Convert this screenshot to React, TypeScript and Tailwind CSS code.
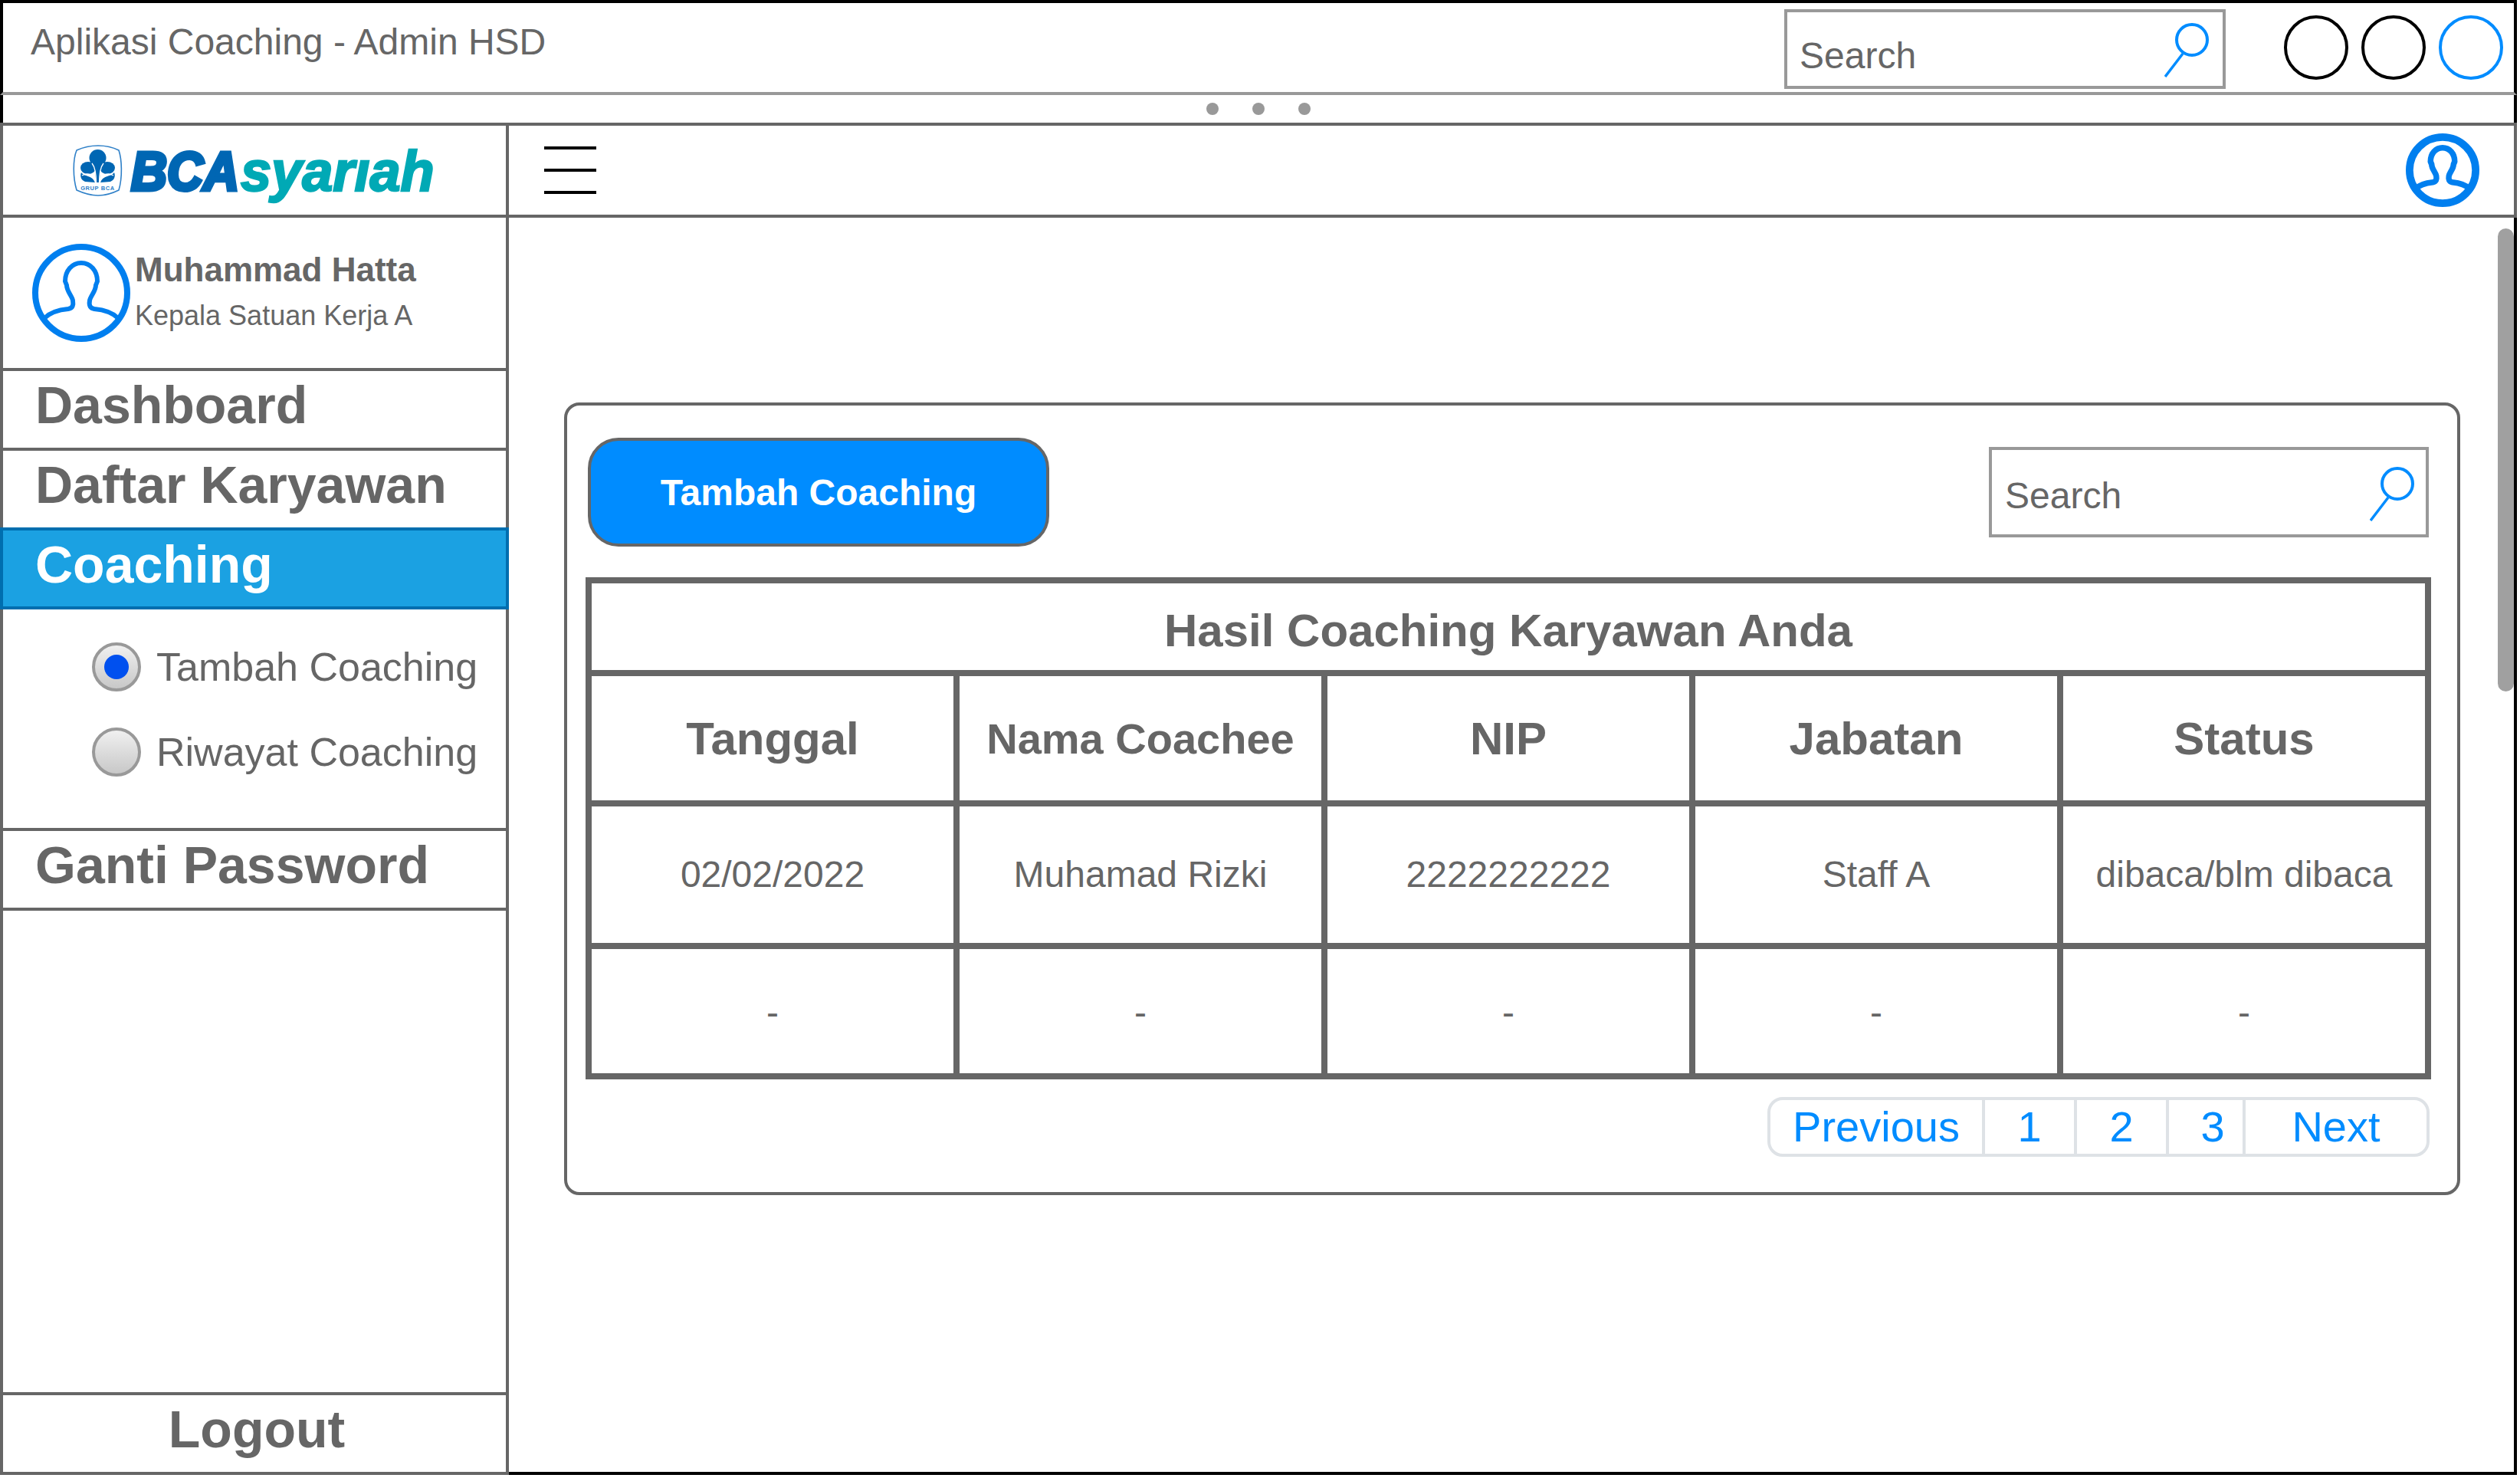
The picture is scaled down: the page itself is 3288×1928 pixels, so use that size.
const sans = "font-['Liberation_Sans',Arial,sans-serif]";

function SearchIcon() {
  return (
    <svg width="60" height="72" viewBox="0 0 60 72" className="shrink-0" fill="none" stroke="#008CFF">
      <circle cx="36" cy="23" r="20" strokeWidth="4" />
      <path d="M24 41 L1 71" strokeWidth="3.5" />
    </svg>
  );
}

function SearchBox({ className }: { className: string }) {
  return (
    <div className={`flex justify-between border-4 border-[#999999] ${className}`}>
      <span className="text-[48px] leading-none text-[#666666]">Search</span>
      <SearchIcon />
    </div>
  );
}

function UserIcon({ size, ring, line }: { size: number; ring: number; line: number }) {
  return (
    <svg width={size} height={size} viewBox="0 0 128 128" fill="none" stroke="#007FEF" className="shrink-0">
      <circle cx="64" cy="64" r={64 - ring / 2} strokeWidth={ring} />
      <path
        d="M16 97 C24 89 36 86 47 85 C53 84 54 80 53 74 C52 68 45 62 45 54 L43 49 C43 35 52 25 64 25 C76 25 85 35 85 49 L83 54 C83 62 76 68 75 74 C74 80 75 84 81 85 C92 86 104 89 112 97"
        strokeWidth={line}
        strokeLinejoin="round"
      />
    </svg>
  );
}

function BcaLogo() {
  const font = "'Liberation Sans', Arial, sans-serif";
  return (
    <svg width="480" height="84" viewBox="0 0 480 84" className="shrink-0 overflow-visible">
      <path
        d="M8 10 C19 5 29 4 36 4 C43 4 53 5 63 10 C67 22 68 45 63 62 C53 67 43 69 36 69 C29 69 19 67 8 62 C3 45 3 22 8 10 Z"
        fill="#ffffff"
        stroke="#2F80C8"
        strokeWidth="1.6"
      />
      <g fill="#0066B3">
        <circle cx="35.5" cy="20" r="11" />
        <path d="M31 28 L40 28 L37.5 52 L33.5 52 Z" />
        <ellipse cx="23" cy="33" rx="10" ry="8" />
        <ellipse cx="48" cy="33" rx="10" ry="8" />
        <path d="M14 39 C18 45 28 42 32 52 L19 51 C14 49 12 44 14 39 Z" />
        <path d="M57 39 C53 45 43 42 39 52 L52 51 C57 49 59 44 57 39 Z" />
      </g>
      <g fill="none" stroke="#ffffff" strokeWidth="1.3">
        <path d="M15 43 C23 38 31 42 33 53" />
        <path d="M56 43 C48 38 40 42 38 53" />
        <path d="M28 27 C32 32 33.5 42 33.5 53" />
        <path d="M43 27 C39 32 37.5 42 37.5 53" />
      </g>
      <text x="35.5" y="62" textAnchor="middle" fontSize="7.5" fontWeight="700" fill="#2F80C8" letterSpacing="0.6" fontFamily={font}>
        GRUP BCA
      </text>
      <text
        transform="translate(79 62) scale(0.93 1)"
        fontSize="70"
        fontWeight="700"
        fontStyle="italic"
        fill="#0066B3"
        stroke="#0066B3"
        strokeWidth="5"
        fontFamily={font}
      >
        BCA
      </text>
      <text
        transform="translate(222 63) scale(0.975 1)"
        fontSize="74"
        fontWeight="700"
        fontStyle="italic"
        fill="#00A9B5"
        stroke="#00A9B5"
        strokeWidth="2.5"
        fontFamily={font}
      >
        syarıah
      </text>
    </svg>
  );
}

function NavItem({ label, className = "" }: { label: string; className?: string }) {
  return (
    <div className={`pl-[42px] pt-[10px] text-[68px] font-bold leading-none text-[#666666] ${className}`}>{label}</div>
  );
}

function Radio({ label, checked }: { label: string; checked?: boolean }) {
  return (
    <div className="flex items-center gap-[20px]">
      <div className="flex h-[64px] w-[64px] shrink-0 items-center justify-center rounded-full border-4 border-[#999999] bg-gradient-to-b from-[#f0f0f0] to-[#c8c8c8]">
        {checked && <div className="h-[32px] w-[32px] rounded-full bg-[#0050EF]" />}
      </div>
      <span className="text-[52px] leading-none text-[#666666]">{label}</span>
    </div>
  );
}

const columns = "grid grid-cols-[472px_480px_480px_480px_480px]";

function Row({ cells, className, cellClass }: { cells: { text: string; size?: string }[]; className: string; cellClass: string }) {
  return (
    <div className={`${columns} border-t-8 border-[#666666] ${className}`}>
      {cells.map((cell, i) => (
        <div
          key={i}
          className={`flex items-center justify-center ${i > 0 ? "border-l-8 border-[#666666]" : ""} ${cellClass} ${cell.size ?? ""}`}
        >
          {cell.text}
        </div>
      ))}
    </div>
  );
}

function Pagination() {
  const items = [
    { label: "Previous", w: "w-[276px]", extra: "" },
    { label: "1", w: "w-[120px]", extra: "" },
    { label: "2", w: "w-[120px]", extra: "" },
    { label: "3", w: "w-[100px]", extra: "pl-[18px]" },
    { label: "Next", w: "w-[240px]", extra: "" },
  ];
  return (
    <div className="mr-[2px] mt-[23px] flex h-[78px] justify-end">
      <div className="flex overflow-hidden rounded-[20px] border-4 border-[#dee2e6]">
        {items.map((item, i) => (
          <div
            key={item.label}
            className={`flex items-center justify-center text-[56px] leading-none text-[#008CFF] ${item.w} ${item.extra} ${i > 0 ? "border-l-4 border-[#dee2e6]" : ""}`}
          >
            {item.label}
          </div>
        ))}
      </div>
    </div>
  );
}

export default function App() {
  const dashes = ["-", "-", "-", "-", "-"].map((text) => ({ text }));
  return (
    <div className={`flex h-[1924px] w-[3284px] flex-col overflow-hidden border-t-4 border-black bg-white ${sans}`}>
      {/* window chrome */}
      <div className="flex h-[120px] shrink-0 justify-between border-b-4 border-x-4 border-b-[#999999] border-x-black pl-[36px]">
        <span className="pt-[27px] text-[48px] leading-none text-[#666666]">Aplikasi Coaching - Admin HSD</span>
        <div className="flex pt-[8px]">
          <SearchBox className="h-[104px] w-[576px] pl-[16px] pr-[16px] pt-[33px] [&>svg]:-mt-[20px]" />
          <div className="ml-[76px] mr-[14px] flex gap-[17px] pt-[8px]">
            <div className="h-[84px] w-[84px] rounded-full border-4 border-black" />
            <div className="h-[84px] w-[84px] rounded-full border-4 border-black" />
            <div className="h-[84px] w-[84px] rounded-full border-4 border-[#008CFF]" />
          </div>
        </div>
      </div>
      <div className="flex h-[36px] shrink-0 items-center justify-center gap-[44px] border-x-4 border-black">
        <div className="h-[16px] w-[16px] rounded-full bg-[#999999]" />
        <div className="h-[16px] w-[16px] rounded-full bg-[#999999]" />
        <div className="h-[16px] w-[16px] rounded-full bg-[#999999]" />
      </div>

      <div className="flex flex-1 border-t-4 border-[#666666]">
        {/* sidebar */}
        <aside className="flex w-[664px] shrink-0 flex-col border-x-4 border-b-4 border-[#666666]">
          <div className="flex h-[120px] shrink-0 items-start justify-center border-b-4 border-[#666666] pt-[22px]">
            <BcaLogo />
          </div>
          <div className="flex h-[200px] shrink-0 gap-[6px] border-b-4 border-[#666666] pl-[38px] pt-[34px]">
            <UserIcon size={128} ring={8} line={6} />
            <div className="pt-[12px] text-[#666666]">
              <div className="text-[44px] font-bold leading-none">Muhammad Hatta</div>
              <div className="mt-[20px] text-[36px] leading-none">Kepala Satuan Kerja A</div>
            </div>
          </div>
          <NavItem label="Dashboard" className="h-[104px] border-b-4 border-[#666666]" />
          <NavItem label="Daftar Karyawan" className="h-[100px]" />
          <div className="-mx-[4px] h-[107px] border-4 border-[#006EAF] bg-[#1BA1E2] pl-[42px] pt-[10px] text-[68px] font-bold leading-none text-white">
            Coaching
          </div>
          <div className="flex h-[285px] shrink-0 flex-col gap-[47px] pl-[116px] pt-[43px]">
            <Radio label="Tambah Coaching" checked />
            <Radio label="Riwayat Coaching" />
          </div>
          <NavItem label="Ganti Password" className="h-[108px] border-y-4 border-[#666666]" />
          <div className="flex-1" />
          <div className="h-[104px] border-t-4 border-[#666666] pl-[6px] pt-[10px] text-center text-[68px] font-bold leading-none text-[#666666]">
            Logout
          </div>
        </aside>

        {/* main */}
        <main className="relative flex flex-1 flex-col">
          <div className="flex h-[120px] shrink-0 items-start justify-between border-b-4 border-r-4 border-[#666666]">
            <div className="ml-[46px] mt-[27px] flex w-[68px] flex-col gap-[25px]">
              <div className="h-[4px] bg-black" />
              <div className="h-[4px] bg-black" />
              <div className="h-[4px] bg-black" />
            </div>
            <div className="mr-[45px] mt-[10px]">
              <UserIcon size={96} ring={13} line={10} />
            </div>
          </div>
          <div className="flex-1 border-b-4 border-r-4 border-black pl-[72px] pt-[241px]">
            <section className="h-[1034px] w-[2474px] rounded-[20px] border-4 border-[#666666] pl-[24px]">
              <div className="w-[2408px]">
                <div className="mt-[42px] flex h-[142px] items-center justify-between pr-[3px]">
                  <button className="ml-[3px] h-[142px] w-[602px] rounded-[40px] border-4 border-[#666666] bg-[#008CFF] pt-[2px] text-[48px] font-bold text-white">
                    Tambah Coaching
                  </button>
                  <SearchBox className="h-[118px] w-[574px] pl-[17px] pr-[13px] pt-[36px] [&>svg]:-mt-[15px]" />
                </div>
                <div className="mt-[40px] border-8 border-[#666666] [&>div:first-child]:border-t-0">
                  <div className="flex h-[113px] items-center justify-center pt-[10px] text-[60px] font-bold leading-none text-[#666666]">
                    Hasil Coaching Karyawan Anda
                  </div>
                  <Row
                    cells={[
                      { text: "Tanggal", size: "text-[60px]" },
                      { text: "Nama Coachee", size: "text-[56px]" },
                      { text: "NIP", size: "text-[60px]" },
                      { text: "Jabatan", size: "text-[60px]" },
                      { text: "Status", size: "text-[60px]" },
                    ]}
                    className="h-[170px]"
                    cellClass="pt-[2px] font-bold leading-none text-[#666666]"
                  />
                  <Row
                    cells={[
                      { text: "02/02/2022" },
                      { text: "Muhamad Rizki" },
                      { text: "2222222222" },
                      { text: "Staff A" },
                      { text: "dibaca/blm dibaca" },
                    ]}
                    className="h-[186px]"
                    cellClass="text-[48px] leading-none text-[#666666]"
                  />
                  <Row cells={dashes} className="h-[170px]" cellClass="pt-[4px] text-[48px] leading-none text-[#666666]" />
                </div>
                <Pagination />
              </div>
            </section>
          </div>
          {/* scrollbar thumb */}
          <div className="absolute right-[4px] top-[134px] h-[604px] w-[21px] rounded-full bg-[#A0A0A0]" />
        </main>
      </div>
    </div>
  );
}
